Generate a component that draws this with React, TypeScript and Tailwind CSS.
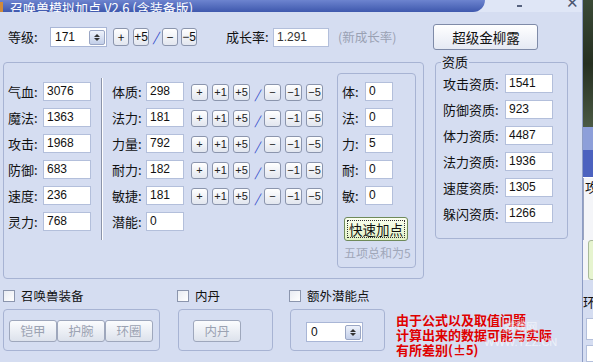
import React from 'react'

const num = "font-['Liberation_Sans',sans-serif]"

function Field({ value, w = 'w-[48px]' }: { value: string; w?: string }) {
  return (
    <div className={`${w} h-[19px] shrink-0 bg-white border border-[#b3bfdb] pl-[3px] text-[12px] leading-[17px] text-[#111] ${num}`}>
      {value}
    </div>
  )
}

function Btn({ label }: { label: string }) {
  return (
    <div className={`w-[17px] h-[17px] shrink-0 rounded-[3px] border border-[#8b95ad] bg-gradient-to-b from-white to-[#e2e6ef] flex items-center justify-center text-[11px] leading-none text-[#222] ${num}`}>
      {label}
    </div>
  )
}

function Slash() {
  return <div className="w-[14px] shrink-0 text-center text-[12px] italic text-[#2a44c8] leading-none pt-[4px]">/</div>
}

function Spinner() {
  return (
    <div className="w-[16px] h-[15px] rounded-[2px] border border-[#9aa6c4] bg-gradient-to-b from-[#eef2fb] to-[#c3cfe9] flex flex-col items-center justify-center gap-[1px]">
      <div className="w-0 h-0 border-l-[3px] border-r-[3px] border-b-[3px] border-l-transparent border-r-transparent border-b-[#333]" />
      <div className="w-0 h-0 border-l-[3px] border-r-[3px] border-t-[3px] border-l-transparent border-r-transparent border-t-[#333]" />
    </div>
  )
}

function Check({ label }: { label: string }) {
  return (
    <div className="flex items-center h-[12px] gap-[6px]">
      <div className="w-[12px] h-[12px] border border-[#8b95ad] bg-gradient-to-br from-[#e8ebf2] to-white" />
      <span className="text-[12.5px] leading-none text-[#111]">{label}</span>
    </div>
  )
}

function DisabledBtn({ label, w = 'w-[48px]' }: { label: string; w?: string }) {
  return (
    <div className={`${w} h-[22px] rounded-[3px] border border-[#9ea7bc] bg-gradient-to-b from-[#fbfcfe] to-[#dde2ec] flex items-center justify-center text-[12.5px] text-[#9ba2b2]`}>
      {label}
    </div>
  )
}

const leftStats = [
  ['气血', '3076'],
  ['魔法', '1363'],
  ['攻击', '1968'],
  ['防御', '683'],
  ['速度', '236'],
  ['灵力', '768'],
]

const attrs = [
  ['体质', '298'],
  ['法力', '181'],
  ['力量', '792'],
  ['耐力', '182'],
  ['敏捷', '181'],
]

const quick = [
  ['体', '0'],
  ['法', '0'],
  ['力', '5'],
  ['耐', '0'],
  ['敏', '0'],
]

const aptitude = [
  ['攻击资质', '1541'],
  ['防御资质', '923'],
  ['体力资质', '4487'],
  ['法力资质', '1936'],
  ['速度资质', '1305'],
  ['躲闪资质', '1266'],
]

export default function App() {
  return (
    <div className="w-[593px] h-[362px] flex overflow-hidden bg-[#2b3326] font-['Noto_Sans_CJK_SC',sans-serif] text-[#111]">
      {/* main window */}
      <div className="w-[583px] h-full shrink-0 flex flex-col bg-[#d5ddf1] border-r border-[#8d9cc4]">
        {/* title bar */}
        <div className="h-[12px] flex bg-[#dfe6f6] overflow-hidden">
          <div className="w-[485px] h-full rounded-br-[12px] bg-gradient-to-b from-[#6d84cf] to-[#3f58ad] flex items-end">
            <div className="w-[3px] h-[10px] bg-[#d08a3a]" />
            <span className="ml-[7px] text-[13px] leading-[13px] text-white translate-y-[2px] whitespace-nowrap">召唤兽模拟加点 V2.6 (含装备版)</span>
          </div>
          <div className="flex-1 flex items-start">
            <div className="ml-[32px] mt-[5px] w-[5px] h-[2px] bg-[#56627e]" />
            <span className={`ml-[44px] -mt-[5px] text-[15px] leading-none text-[#4a5570] ${num}`}>✕</span>
          </div>
        </div>

        {/* level row */}
        <div className="mt-[12px] h-[26px] flex items-center">
          <span className="ml-[8px] w-[42px] text-[13px]">等级:</span>
          <div className="w-[57px] h-[20px] bg-white border border-[#a9b6d6] flex items-center justify-between pl-[4px] pr-[1px]">
            <span className={`text-[12px] ${num}`}>171</span>
            <Spinner />
          </div>
          <div className="ml-[6px] flex items-center gap-[4px]">
            <div className="w-[16px] h-[18px] rounded-[3px] border border-[#8b95ad] bg-gradient-to-b from-white to-[#e2e6ef] flex items-center justify-center text-[12px] leading-none">+</div>
            <div className={`w-[16px] h-[18px] rounded-[3px] border border-[#8b95ad] bg-gradient-to-b from-white to-[#e2e6ef] flex items-center justify-center text-[12px] leading-none ${num}`}>+5</div>
          </div>
          <div className="w-[13px] text-center text-[13px] italic text-[#2a44c8]">/</div>
          <div className="flex items-center gap-[3px]">
            <div className="w-[16px] h-[18px] rounded-[3px] border border-[#8b95ad] bg-gradient-to-b from-white to-[#e2e6ef] flex items-center justify-center text-[12px] leading-none">−</div>
            <div className={`w-[16px] h-[18px] rounded-[3px] border border-[#8b95ad] bg-gradient-to-b from-white to-[#e2e6ef] flex items-center justify-center text-[12px] leading-none ${num}`}>−5</div>
          </div>
          <span className="ml-[29px] w-[47px] text-[13px]">成长率:</span>
          <div className={`w-[56px] h-[19px] bg-white border border-[#b3bfdb] pl-[3px] text-[12px] leading-[17px] text-[#333] ${num}`}>1.291</div>
          <span className="ml-[9px] text-[12.5px] text-[#9aa1b3]">(新成长率)</span>
          <div className="ml-[37px] w-[105px] h-[26px] rounded-[3px] border border-[#7f8ba8] bg-gradient-to-b from-white to-[#e5e9f3] flex items-center justify-center text-[13.5px]">超级金柳露</div>
        </div>

        {/* main area */}
        <div className="mt-[12px] flex items-start">
          <div className="ml-[3px] w-[421px] h-[217px] rounded-[4px] border border-[#a7b3d3] flex items-start">
            {/* base stats */}
            <div className="ml-[4px] mt-[19px] flex flex-col gap-[7px]">
              {leftStats.map(([k, v]) => (
                <div key={k} className="flex items-center h-[19px]">
                  <span className="w-[35px] text-[13px] leading-none">{k}:</span>
                  <Field value={v} />
                </div>
              ))}
            </div>
            <div className="ml-[10px] mt-[15px] w-[2px] h-[162px] border-l border-[#8b94aa] border-r border-r-white" />
            {/* attributes */}
            <div className="ml-[9px] mt-[19px] flex flex-col gap-[7px]">
              {attrs.map(([k, v]) => (
                <div key={k} className="flex items-center h-[19px]">
                  <span className="w-[34px] text-[13px] leading-none">{k}:</span>
                  <Field value={v} w="w-[38px]" />
                  <div className="ml-[7px] flex items-center gap-[4px] mt-[1px]">
                    <Btn label="+" />
                    <Btn label="+1" />
                    <Btn label="+5" />
                  </div>
                  <Slash />
                  <div className="flex items-center gap-[4px] mt-[1px]">
                    <Btn label="−" />
                    <Btn label="−1" />
                    <Btn label="−5" />
                  </div>
                </div>
              ))}
              <div className="flex items-center h-[19px]">
                <span className="w-[34px] text-[13px] leading-none">潜能:</span>
                <Field value="0" w="w-[38px]" />
              </div>
            </div>
            {/* quick add */}
            <div className="ml-[14px] mt-[10px] w-[79px] h-[195px] rounded-[4px] border border-[#a7b3d3] pl-[4px] pt-[8px] flex flex-col">
              <div className="flex flex-col gap-[7px]">
                {quick.map(([k, v]) => (
                  <div key={k} className="flex items-center h-[19px]">
                    <span className="w-[23px] text-[13px] leading-none">{k}:</span>
                    <Field value={v} w="w-[28px]" />
                  </div>
                ))}
              </div>
              <div className="mt-[12px] ml-[2px] w-[64px] h-[24px] rounded-[3px] border border-[#6f8a5a] bg-gradient-to-b from-[#fbfff0] to-[#e3f3c6] p-[2px]">
                <div className="w-full h-full border border-dotted border-[#333] flex items-center justify-center text-[13.5px]">快速加点</div>
              </div>
              <span className="mt-[4px] ml-[2px] text-[12px] leading-[16px] text-[#a0a7b9] whitespace-nowrap">五项总和为5</span>
            </div>
          </div>

          {/* aptitude */}
          <div className="ml-[11px] relative w-[133px] h-[177px] rounded-[4px] border border-[#a7b3d3] pl-[7px] pt-[11px]">
            <span className="absolute -top-[8px] left-[5px] px-[1px] bg-[#d5ddf1] text-[13px] leading-[14px]">资质</span>
            <div className="flex flex-col gap-[7px]">
              {aptitude.map(([k, v]) => (
                <div key={k} className="flex items-center h-[19px]">
                  <span className="w-[62px] text-[13px] leading-none whitespace-nowrap">{k}:</span>
                  <Field value={v} />
                </div>
              ))}
            </div>
          </div>
        </div>

        {/* bottom row */}
        <div className="mt-[11px] flex items-start">
          <div className="ml-[3px] w-[157px] flex flex-col">
            <Check label="召唤兽装备" />
            <div className="mt-[7px] h-[42px] rounded-[4px] border border-[#a7b3d3] pl-[5px] pt-[10px] flex">
              <DisabledBtn label="铠甲" />
              <DisabledBtn label="护腕" />
              <DisabledBtn label="环圈" />
            </div>
          </div>
          <div className="ml-[17px] w-[96px] flex flex-col">
            <Check label="内丹" />
            <div className="mt-[7px] ml-[1px] h-[42px] rounded-[4px] border border-[#a7b3d3] pl-[14px] pt-[10px] flex">
              <DisabledBtn label="内丹" />
            </div>
          </div>
          <div className="ml-[16px] w-[96px] flex flex-col">
            <Check label="额外潜能点" />
            <div className="mt-[7px] ml-[1px] h-[42px] rounded-[4px] border border-[#a7b3d3] pl-[15px] pt-[12px] flex">
              <div className="w-[57px] h-[20px] bg-white border border-[#a9b6d6] flex items-center justify-between pl-[4px] pr-[1px]">
                <span className={`text-[12px] ${num}`}>0</span>
                <Spinner />
              </div>
            </div>
          </div>
          <div className="relative ml-[11px] mt-[22px] flex flex-col text-[13px] leading-[15px] font-bold text-[#e00000] whitespace-nowrap">
            <span>由于公式以及取值问题</span>
            <span>计算出来的数据可能与实际</span>
            <span>有所差别(±5)</span>
            <div className="absolute left-[88px] top-[8px] flex flex-col items-center opacity-60 font-normal">
              <span className="px-[3px] text-[11px] leading-[13px] text-white bg-white/20 rounded-[2px]">游戏网</span>
              <span className={`mt-[3px] text-[11px] leading-[12px] text-white ${num}`}>WWW.YZZ.CN</span>
            </div>
          </div>
        </div>
      </div>

      {/* window behind */}
      <div className="flex-1 flex flex-col">
        <div className="h-[127px] bg-gradient-to-b from-[#3a4a36] via-[#263021] to-[#4b5a44]" />
        <div className="h-[23px] bg-[#8d9fd9]" />
        <div className="h-[27px] bg-[#4c62bf]" />
        <div className="h-[1px] bg-white" />
        <div className="h-[62px] bg-[#f4f5f8] border-l border-[#9aa4bf] pl-[1px] pt-[1px] text-[13px] leading-[16px] overflow-hidden">攻</div>
        <div className="h-[40px] bg-[#f4f5f8] pl-[5px]">
          <div className="h-full bg-[#e6f4cf] border border-[#a9b99a] rounded-l-[3px]" />
        </div>
        <div className="h-[38px] bg-[#d5ddf1] text-[13px] leading-[16px] pt-[14px] overflow-hidden">环</div>
        <div className="h-[22px] bg-[#d5ddf1] pl-[3px]"><div className="h-full bg-white border border-[#b3bfdb]" /></div>
        <div className="h-[5px] bg-[#d5ddf1]" />
        <div className="flex-1 bg-[#d5ddf1] pl-[3px]"><div className="h-full bg-white border border-[#b3bfdb]" /></div>
      </div>
    </div>
  )
}
